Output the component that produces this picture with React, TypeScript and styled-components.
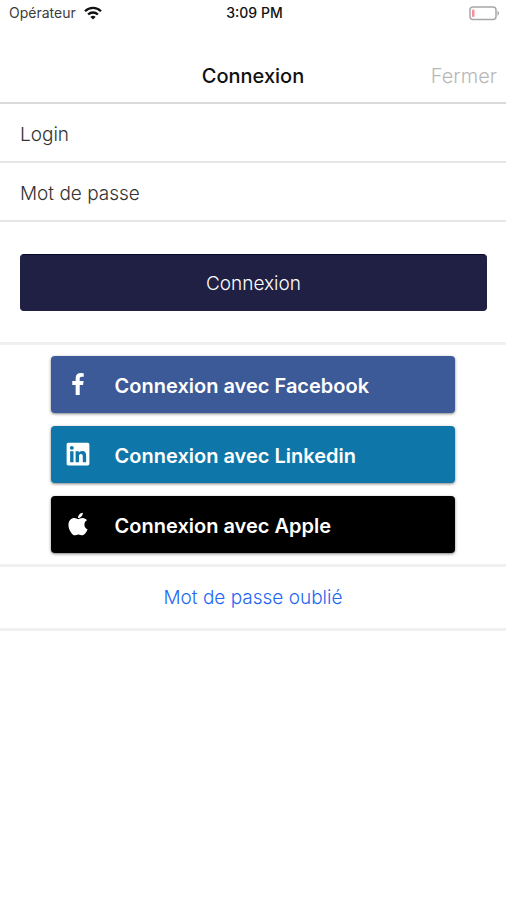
import React from "react";
import styled, { createGlobalStyle } from "styled-components";
import { FaLinkedin, FaApple } from "react-icons/fa";

const GlobalStyle = createGlobalStyle`
  *, *::before, *::after { box-sizing: border-box; }
  body {
    margin: 0;
    background: #fff;
    color: #111;
    font-family: Inter, "Liberation Sans", sans-serif;
  }
  button, input { font: inherit; }
`;

const Page = styled.div`
  min-height: 100vh;
  background: #fff;
`;

const StatusBar = styled.div`
  display: grid;
  grid-template-columns: 1fr auto 1fr;
  align-items: center;
  height: 26px;
  padding: 0 6px 0 9px;
  font-size: 14px;
  line-height: 16px;
`;

const Carrier = styled.span`
  display: flex;
  align-items: center;
  gap: 8px;
  color: #3c3c3c;
`;

const Clock = styled.span`
  font-weight: 500;
  color: #111;
`;

const Battery = styled.svg`
  justify-self: end;
`;

const Header = styled.header`
  display: grid;
  grid-template-columns: 1fr auto 1fr;
  align-items: center;
  height: 78px;
  padding: 24px 9px 0;
  border-bottom: 2px solid #dadada;
`;

const Title = styled.h1`
  grid-column: 2;
  margin: 0;
  font-size: 20px;
  line-height: 26px;
  font-weight: 500;
`;

const CloseButton = styled.button`
  justify-self: end;
  padding: 0;
  border: 0;
  background: none;
  color: #b8b8b8;
  font-size: 20px;
  line-height: 26px;
  font-weight: 300;
  cursor: pointer;
`;

const Field = styled.input`
  display: block;
  width: 100%;
  height: 59px;
  padding: 4px 20px 0;
  border: 0;
  border-bottom: 2px solid #e6e6e6;
  border-radius: 0;
  background: none;
  color: #222;
  font-size: 19px;
  font-weight: 300;
  outline-offset: -2px;
  &::placeholder {
    color: #333;
    opacity: 1;
  }
`;

const SubmitArea = styled.div`
  padding: 32px 19px 31px 20px;
`;

const SubmitButton = styled.button`
  display: block;
  width: 100%;
  height: 57px;
  padding: 2px 0 0;
  border: 1px solid #1f2044;
  border-top-color: #07072c;
  border-radius: 4px;
  background: #1f2044;
  color: #fff;
  font-size: 19px;
  font-weight: 300;
  cursor: pointer;
`;

const SocialList = styled.div`
  display: flex;
  flex-direction: column;
  gap: 13px;
  padding: 11px 10%;
  border-top: 3px solid #f0f0f0;
`;

const SocialButton = styled.button<{ $color: string }>`
  display: flex;
  align-items: center;
  gap: 22px;
  height: 57px;
  padding: 2px 12px 0;
  border: 0;
  border-radius: 4px;
  background: ${({ $color }) => $color};
  box-shadow: 0 1px 3px rgba(0, 0, 0, 0.5);
  color: #fff;
  font-size: 20px;
  font-weight: 600;
  cursor: pointer;
`;

const IconSlot = styled.span`
  display: flex;
  justify-content: center;
  width: 30px;
  padding-bottom: 4px;
`;

const Forgot = styled.div`
  display: flex;
  align-items: center;
  justify-content: center;
  height: 67px;
  border: solid #f0f0f0;
  border-width: 3px 0;
`;

const ForgotLink = styled.a`
  color: #1f68f0;
  font-size: 19px;
  line-height: 26px;
  font-weight: 300;
  text-decoration: none;
`;

function FacebookMark() {
  return (
    <svg width="12" height="22" viewBox="479 0 864 1664" fill="currentColor">
      <path d="M1343 12v264h-157q-86 0-116 36t-30 108v189h293l-39 296h-254v759h-306v-759h-255v-296h255v-218q0-186 104-288.500t277-102.500q147 0 228 12z" />
    </svg>
  );
}

const providers = [
  { name: "Facebook", color: "#3c5998", icon: <FacebookMark /> },
  { name: "Linkedin", color: "#0e76a8", icon: <FaLinkedin size={26} /> },
  { name: "Apple", color: "#000", icon: <FaApple size={26} /> },
];

export default function App() {
  return (
    <Page>
      <GlobalStyle />
      <StatusBar>
        <Carrier>
          Opérateur
          <svg width="18" height="14" viewBox="0 0 18 14" aria-hidden="true">
            <g fill="none" stroke="#111" strokeWidth="2.3">
              <path d="M1 5.2C5.6.7 12.4.7 17 5.2" />
              <path d="M4.1 8.5c2.8-2.7 7-2.7 9.8 0" />
            </g>
            <path d="M9 13.5 6.4 10.9c1.4-1.4 3.8-1.4 5.2 0z" fill="#111" />
          </svg>
        </Carrier>
        <Clock>3:09 PM</Clock>
        <Battery width="31" height="15" viewBox="0 0 31 15" aria-hidden="true">
          <rect x="1" y="1" width="26" height="12.5" rx="3" fill="#fff" stroke="#a8a8a8" strokeWidth="1.5" />
          <rect x="3" y="3.5" width="2.5" height="7.5" rx="1" fill="#ff8c9c" />
          <path d="M28.5 4.8c2 .8 2 4.1 0 4.9z" fill="#a8a8a8" />
        </Battery>
      </StatusBar>
      <Header>
        <Title>Connexion</Title>
        <CloseButton type="button">Fermer</CloseButton>
      </Header>
      <main>
        <form onSubmit={(event) => event.preventDefault()}>
          <Field type="text" placeholder="Login" aria-label="Login" autoComplete="username" />
          <Field
            type="password"
            placeholder="Mot de passe"
            aria-label="Mot de passe"
            autoComplete="current-password"
          />
          <SubmitArea>
            <SubmitButton type="submit">Connexion</SubmitButton>
          </SubmitArea>
        </form>
        <SocialList>
          {providers.map(({ name, color, icon }) => (
            <SocialButton key={name} type="button" $color={color}>
              <IconSlot aria-hidden="true">{icon}</IconSlot>
              Connexion avec {name}
            </SocialButton>
          ))}
        </SocialList>
        <Forgot>
          <ForgotLink href="#mot-de-passe">Mot de passe oublié</ForgotLink>
        </Forgot>
      </main>
    </Page>
  );
}
